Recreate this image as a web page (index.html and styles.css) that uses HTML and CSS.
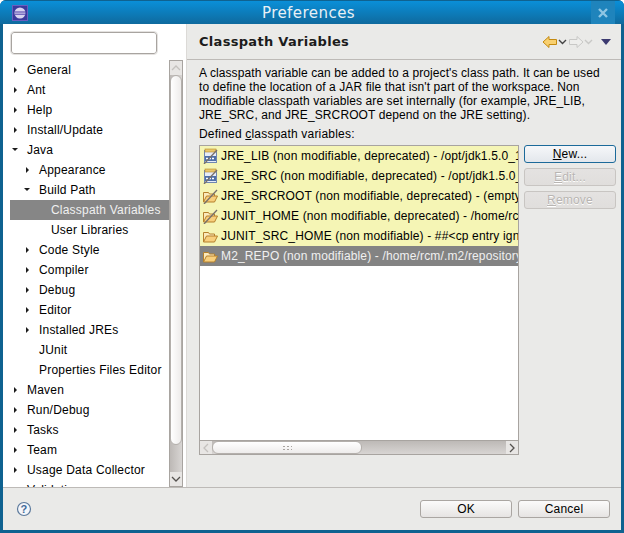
FILE: index.html
```html
<!DOCTYPE html>
<html lang="en">
  <head>
    <meta charset="UTF-8">
    <title>Preferences</title>
    <link rel="stylesheet" href="styles.css">
  </head>
  <body>
    <div class="window">
      <div class="titlebar">
        <svg class="app-icon" width="16" height="16" viewBox="0 0 16 16">
          <rect x="0.5" y="0.5" width="15" height="15" fill="#3b3a9c" stroke="#6a5cc0"/>
          <circle cx="8" cy="8" r="5.5" fill="#d8d4f0"/>
          <path d="M3 7h11M3 9.2h11" stroke="#4a3aa8" stroke-width="1"/>
        </svg>
        <div class="title">Preferences</div>
        <div class="close">
          <svg width="12" height="12" viewBox="0 0 12 12"><path d="M2 2l8 8M10 2l-8 8" stroke="#8fc6e4" stroke-width="2.4"/></svg>
        </div>
      </div>
      <div class="content">
        <div class="main">
          <div class="sidebar">
            <div class="filter"><input class="filter-input" type="text"></div>
            <div class="tree-wrap">
              <ul class="tree">
                <li class="l0"><i class="arrow"></i>General</li>
                <li class="l0"><i class="arrow"></i>Ant</li>
                <li class="l0"><i class="arrow"></i>Help</li>
                <li class="l0"><i class="arrow"></i>Install/Update</li>
                <li class="l0"><i class="arrow open"></i>Java</li>
                <li class="l1"><i class="arrow"></i>Appearance</li>
                <li class="l1"><i class="arrow open"></i>Build Path</li>
                <li class="l2 selected"><i class="arrow none"></i>Classpath Variables</li>
                <li class="l2"><i class="arrow none"></i>User Libraries</li>
                <li class="l1"><i class="arrow"></i>Code Style</li>
                <li class="l1"><i class="arrow"></i>Compiler</li>
                <li class="l1"><i class="arrow"></i>Debug</li>
                <li class="l1"><i class="arrow"></i>Editor</li>
                <li class="l1"><i class="arrow"></i>Installed JREs</li>
                <li class="l1"><i class="arrow none"></i>JUnit</li>
                <li class="l1"><i class="arrow none"></i>Properties Files Editor</li>
                <li class="l0"><i class="arrow"></i>Maven</li>
                <li class="l0"><i class="arrow"></i>Run/Debug</li>
                <li class="l0"><i class="arrow"></i>Tasks</li>
                <li class="l0"><i class="arrow"></i>Team</li>
                <li class="l0"><i class="arrow"></i>Usage Data Collector</li>
                <li class="l0"><i class="arrow none"></i>Validation</li>
              </ul>
              <div class="vscroll">
                <div class="vbtn"><svg width="10" height="6" viewBox="0 0 10 6"><path d="M1 5l4-4 4 4" fill="none" stroke="#c4c1be" stroke-width="1.3"/></svg></div>
                <div class="vtrack"><div class="vthumb"></div></div>
                <div class="vbtn"><svg width="10" height="6" viewBox="0 0 10 6"><path d="M1 1l4 4 4-4" fill="none" stroke="#55524f" stroke-width="1.3"/></svg></div>
              </div>
            </div>
          </div>
          <div class="page">
            <div class="page-head">
              <h1>Classpath Variables</h1>
              <div class="nav">
                <svg width="16" height="14" viewBox="0 0 16 14"><path d="M1 7l6-5.500v3h7.500v5H7v3z" fill="#f8d070" stroke="#c48a10"/></svg>
                <svg class="chev" width="9" height="6" viewBox="0 0 9 6"><path d="M1 1l3.500 3.500L8 1" fill="none" stroke="#444" stroke-width="1.4"/></svg>
                <svg width="16" height="14" viewBox="0 0 16 14"><path d="M15 7L9 1.500v3H1.500v5H9v3z" fill="#eeeeec" stroke="#c8c8c6"/></svg>
                <svg class="chev" width="9" height="6" viewBox="0 0 9 6"><path d="M1 1l3.500 3.500L8 1" fill="none" stroke="#c8c8c6" stroke-width="1.4"/></svg>
                <svg class="menu" width="10" height="6" viewBox="0 0 10 6"><path d="M0 0h10L5 6z" fill="#3c3a70"/></svg>
              </div>
            </div>
            <div class="page-body">
              <p class="desc">A classpath variable can be added to a project's class path. It can be used to define the location of a JAR file that isn't part of the workspace. Non modifiable classpath variables are set internally (for example, JRE_LIB, JRE_SRC, and JRE_SRCROOT depend on the JRE setting).</p>
              <div class="label">Defined <u>c</u>lasspath variables:</div>
              <div class="vars">
                <div class="list-box">
                  <div class="rows">
                    <div class="row ro"><svg class="ic" width="16" height="16"><use href="#jar"/><use href="#strike"/></svg><span>JRE_LIB (non modifiable, deprecated) - /opt/jdk1.5.0_1</span></div>
                    <div class="row ro"><svg class="ic" width="16" height="16"><use href="#jar"/><use href="#strike"/></svg><span>JRE_SRC (non modifiable, deprecated) - /opt/jdk1.5.0_</span></div>
                    <div class="row ro"><svg class="ic" width="16" height="16"><use href="#folder"/><use href="#strike"/></svg><span>JRE_SRCROOT (non modifiable, deprecated) - (empty</span></div>
                    <div class="row ro"><svg class="ic" width="16" height="16"><use href="#folder"/><use href="#strike"/></svg><span>JUNIT_HOME (non modifiable, deprecated) - /home/rcm</span></div>
                    <div class="row ro"><svg class="ic" width="16" height="16"><use href="#folder"/></svg><span>JUNIT_SRC_HOME (non modifiable) - ##&lt;cp entry ign</span></div>
                    <div class="row sel"><svg class="ic" width="16" height="16"><use href="#folder"/></svg><span>M2_REPO (non modifiable) - /home/rcm/.m2/repository</span></div>
                  </div>
                  <div class="hscroll">
                    <div class="hbtn"><svg width="6" height="10" viewBox="0 0 6 10"><path d="M5 1L1 5l4 4" fill="none" stroke="#c4c1be" stroke-width="1.3"/></svg></div>
                    <div class="htrack"><div class="hthumb"><span class="grip"></span></div></div>
                    <div class="hbtn"><svg width="6" height="10" viewBox="0 0 6 10"><path d="M1 1l4 4-4 4" fill="none" stroke="#55524f" stroke-width="1.3"/></svg></div>
                  </div>
                </div>
                <div class="side-btns">
                  <button class="btn focus"><u>N</u>ew...</button>
                  <button class="btn off"><u>E</u>dit...</button>
                  <button class="btn off"><u>R</u>emove</button>
                </div>
              </div>
            </div>
          </div>
        </div>
        <div class="footer">
          <svg class="help" width="16" height="16" viewBox="0 0 16 16">
            <circle cx="8" cy="8" r="6.500" fill="#f4f6fa" stroke="#5c7a9c" stroke-width="1.200"/>
            <text x="8" y="12" text-anchor="middle" class="help-q">?</text>
          </svg>
          <div class="footer-btns">
            <button class="btn">OK</button>
            <button class="btn">Cancel</button>
          </div>
        </div>
      </div>
    </div>
    <svg class="defs" width="0" height="0">
      <defs>
        <g id="jar">
          <rect x="2.500" y="2.500" width="12" height="12" fill="#e6ecf8" stroke="#6f86b0"/>
          <rect x="3" y="8" width="11" height="5" fill="#4f6fa8"/>
          <path d="M4 10.500h9" stroke="#fff" stroke-width="1.500" stroke-dasharray="2 1"/>
          <rect x="3" y="1" width="11" height="3" fill="#e9c66c" stroke="#b58a28" stroke-width="0.600"/>
        </g>
        <g id="folder">
          <path d="M1.500 14v-9.500h5l1 1.500h5v2.500" fill="#fbe9bc" stroke="#b5802c"/>
          <path d="M1.500 14l3-6h11l-3 6z" fill="#f8cf7c" stroke="#b5802c"/>
        </g>
        <path id="strike" d="M2 16L15 2" stroke="#77706a" stroke-width="1.300"/>
      </defs>
    </svg>
  </body>
</html>
```

FILE: styles.css
```css
* {
  box-sizing: border-box;
}

html,
body {
  margin: 0;
  height: 100%;
}

body {
  font-family: "Liberation Sans", Arial, sans-serif;
  font-size: 12px;
  letter-spacing: 0.2px;
  color: #000;
}

.defs {
  display: block;
}

.window {
  width: 624px;
  height: 533px;
  display: flex;
  flex-direction: column;
  background: #0f6290;
  border-radius: 6px 6px 0 0;
  overflow: hidden;
}

.titlebar {
  height: 24px;
  flex: none;
  display: flex;
  align-items: center;
  background: linear-gradient(#0a8fd8, #0f6a9e);
  border-top: 1px solid #0f6290;
  padding-left: 12px;
}

.title {
  flex: 1;
  text-align: center;
  color: #e8f0f5;
  font-family: "DejaVu Sans", sans-serif;
  font-size: 15px;
  letter-spacing: 0.45px;
  padding-right: 2px;
}

.close {
  width: 24px;
  height: 23px;
  margin-right: 9px;
  display: flex;
  align-items: center;
  justify-content: center;
  background: #1f84bc;
}

.content {
  flex: 1;
  min-height: 0;
  margin: 0 3px 3px;
  display: flex;
  flex-direction: column;
  background: #eaeae8;
}

.main {
  height: 464px;
  flex: none;
  display: flex;
  border-bottom: 1px solid #bdbab7;
}

.sidebar {
  width: 184px;
  flex: none;
  display: flex;
  flex-direction: column;
  background: #fff;
  border-right: 1px solid #dcdad7;
}

.filter {
  padding: 8px 0 0 8px;
  height: 36px;
  flex: none;
}

.filter-input {
  display: block;
  width: 146px;
  height: 22px;
  border: 1px solid #a8a4a0;
  border-radius: 3px;
  background: #fff;
  outline: 1px solid #e4e2e0;
}

.tree-wrap {
  flex: 1;
  min-height: 0;
  display: flex;
  overflow: hidden;
}

.tree {
  flex: 1;
  list-style: none;
  margin: 0 0 0 7px;
  padding: 0;
  overflow: hidden;
}

.tree li {
  height: 20px;
  display: flex;
  align-items: center;
  white-space: nowrap;
  font-size: 12px;
}

.l0 {
  padding-left: 1px;
}

.l1 {
  padding-left: 13px;
}

.l2 {
  padding-left: 25px;
}

.tree .selected {
  background: #868686;
  color: #f0f0f0;
}

.arrow {
  width: 16px;
  height: 10px;
  flex: none;
  position: relative;
}

.arrow::before {
  content: "";
  position: absolute;
  left: 3px;
  top: 2px;
  border-style: solid;
  border-width: 3px 0 3px 3px;
  border-color: transparent transparent transparent #1c1c1c;
}

.arrow.open::before {
  left: 1px;
  top: 3px;
  border-width: 3px 3px 0 3px;
  border-color: #1c1c1c transparent transparent transparent;
}

.arrow.none::before {
  display: none;
}

.vscroll {
  width: 14px;
  margin-right: 3px;
  flex: none;
  display: flex;
  flex-direction: column;
  border: 1px solid #a8a4a0;
  background: linear-gradient(90deg, #bdb9b6, #d8d5d3);
}

.vbtn {
  height: 14px;
  flex: none;
  display: flex;
  align-items: center;
  justify-content: center;
  background: #e8e6e4;
}

.vtrack {
  flex: 1;
  border-radius: 0 0 6px 6px;
}

.vthumb {
  height: 370px;
  background: linear-gradient(90deg, #fff, #eeeceb);
  border: 1px solid #b4b0ac;
  border-radius: 6px;
}

.page {
  flex: 1;
  min-width: 0;
  display: flex;
  flex-direction: column;
}

.page-head {
  height: 36px;
  flex: none;
  display: flex;
  align-items: center;
  justify-content: space-between;
  padding: 0 10px 0 12px;
  border-bottom: 1px solid #bdbab7;
}

h1 {
  margin: 0;
  font-size: 13px;
  font-weight: bold;
  letter-spacing: 0.3px;
  color: #1c1c1c;
  font-family: "DejaVu Sans", sans-serif;
}

.nav {
  display: flex;
  align-items: center;
}

.chev {
  margin: 1px 1px 0 0;
}

.menu {
  margin-left: 7px;
}

.page-body {
  flex: 1;
  min-height: 0;
  padding: 6px 5px 0 12px;
  display: flex;
  flex-direction: column;
}

.desc {
  margin: 0;
  padding-right: 12px;
  line-height: 14px;
  letter-spacing: 0.1px;
}

.label {
  margin-top: 5px;
  height: 16px;
  line-height: 15px;
}

.vars {
  flex: 1;
  min-height: 0;
  display: flex;
  margin-top: 2px;
  margin-bottom: 32px;
}

.list-box {
  width: 320px;
  flex: none;
  display: flex;
  flex-direction: column;
  border: 1px solid #a8a4a0;
  background: #fff;
  overflow: hidden;
}

.rows {
  flex: 1;
  min-height: 0;
}

.row {
  height: 20px;
  display: flex;
  align-items: center;
  padding-left: 2px;
  white-space: nowrap;
  letter-spacing: 0.15px;
  overflow: hidden;
}

.row .ic {
  flex: none;
  margin-right: 3px;
}

.row.ro {
  background: #f5f5b5;
}

.row.sel {
  background: #838383;
  color: #f0f0f0;
}

.hscroll {
  height: 14px;
  flex: none;
  display: flex;
  border-top: 1px solid #a8a4a0;
  background: linear-gradient(#bdb9b6, #d8d5d3);
}

.hbtn {
  width: 12px;
  flex: none;
  display: flex;
  align-items: center;
  justify-content: center;
  background: #e8e6e4;
}

.htrack {
  flex: 1;
}

.hthumb {
  width: 150px;
  height: 100%;
  display: flex;
  align-items: center;
  justify-content: center;
  background: linear-gradient(#fff, #eeeceb);
  border: 1px solid #b4b0ac;
  border-radius: 6px;
}

.grip {
  width: 10px;
  height: 5px;
  background-image: radial-gradient(#a8a4a0 0.8px, transparent 1px);
  background-size: 4px 3px;
}

.side-btns {
  margin-left: 5px;
  display: flex;
  flex-direction: column;
  gap: 5px;
}

.btn {
  width: 92px;
  height: 18px;
  padding: 0;
  font: 12px "Liberation Sans", Arial, sans-serif;
  letter-spacing: 0.2px;
  color: #000;
  background: linear-gradient(#fbfbfb, #e6e4e3);
  border: 1px solid #aaa6a2;
  border-radius: 3px;
}

.btn.focus {
  border-color: #1c6a9a;
  background: linear-gradient(#f6f7f9, #e3e7ec);
}

.btn.off {
  color: #b8b5b2;
  text-shadow: 0 1px 0 #fff;
  background: linear-gradient(#e4e2e1, #e0dedc);
  border-color: #c8c5c2;
}

.footer {
  flex: 1;
  min-height: 0;
  display: flex;
  align-items: center;
  justify-content: space-between;
  padding: 0 11px 0 13px;
}

.help-q {
  font: bold 11px "Liberation Sans", Arial, sans-serif;
  fill: #3f6a98;
}

.footer-btns {
  display: flex;
  gap: 6px;
}
```
